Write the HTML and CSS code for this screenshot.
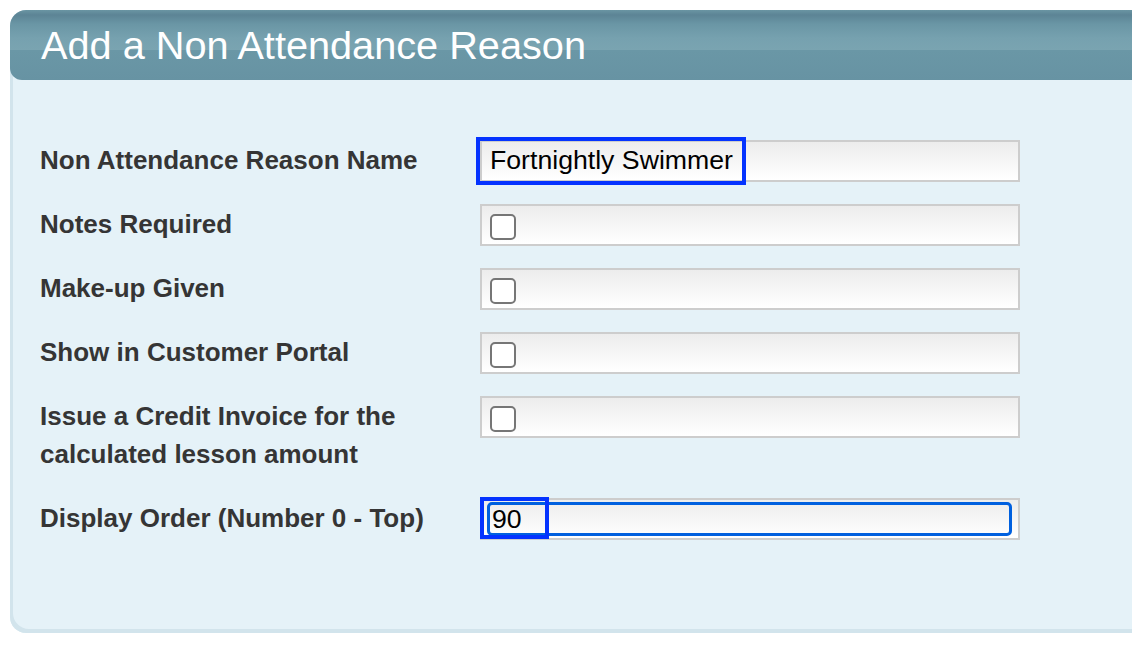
FILE: index.html
```html
<!DOCTYPE html>
<html lang="en">
<head>
<meta charset="utf-8">
<title>Add a Non Attendance Reason</title>
<link rel="stylesheet" href="styles.css">
</head>
<body>
<div class="panel">
  <div class="panel-header">
    <h1 class="panel-title">Add a Non Attendance Reason</h1>
  </div>
  <form class="panel-body">
    <div class="row">
      <label class="label">Non Attendance Reason Name</label>
      <div class="field">
        <input class="text-input" type="text" value="Fortnightly Swimmer">
        <span class="mark mark-name"></span>
      </div>
    </div>
    <div class="row">
      <label class="label">Notes Required</label>
      <div class="field"><input class="check" type="checkbox"></div>
    </div>
    <div class="row">
      <label class="label">Make-up Given</label>
      <div class="field"><input class="check" type="checkbox"></div>
    </div>
    <div class="row">
      <label class="label">Show in Customer Portal</label>
      <div class="field"><input class="check" type="checkbox"></div>
    </div>
    <div class="row">
      <label class="label">Issue a Credit Invoice for the calculated lesson amount</label>
      <div class="field"><input class="check" type="checkbox"></div>
    </div>
    <div class="row">
      <label class="label">Display Order (Number 0 - Top)</label>
      <div class="field">
        <input class="order-input" type="text" value="90">
        <span class="mark mark-order"></span>
      </div>
    </div>
  </form>
</div>
</body>
</html>
```

FILE: styles.css
```css
html, body {
  margin: 0;
  background: #ffffff;
}
body {
  padding: 10px 0 0 10px;
  overflow: hidden;
  font-family: "Liberation Sans", Arial, sans-serif;
}
.panel {
  width: 1140px;
  background: #e5f2f8;
  border-radius: 16px 0 0 16px;
  box-shadow: inset 3px -4px 0 #d2e4ec;
}
.panel-header {
  height: 70px;
  border-radius: 16px 0 0 12px;
  background: linear-gradient(to bottom,
    #6a95a3 0px,
    #5c8495 5px,
    #6a96a5 14px,
    #76a1af 28px,
    #7aa4b1 40px,
    #6a97a6 40px,
    #6793a3 70px);
}
.panel-title {
  margin: 0;
  padding-left: 31px;
  font-family: "Liberation Sans", Arial, sans-serif;
  font-size: 39.7px;
  line-height: 70px;
  font-weight: normal;
  color: #ffffff;
}
.panel-body {
  display: flex;
  flex-direction: column;
  gap: 22px;
  margin: 0;
  padding: 60px 0 93px 30px;
}
.row {
  display: flex;
  align-items: flex-start;
  gap: 20px;
}
.label {
  width: 420px;
  padding: 1px 0 3px;
  font-size: 26px;
  line-height: 38px;
  font-weight: bold;
  color: #353535;
}
.field {
  position: relative;
  width: 540px;
  height: 42px;
  box-sizing: border-box;
  border: 2px solid #cdcdcd;
  background: linear-gradient(to bottom, #ececec, #ffffff);
}
.text-input {
  display: block;
  width: 100%;
  height: 38px;
  box-sizing: border-box;
  margin: 0;
  padding: 0 8px 2px;
  border: none;
  outline: none;
  background: transparent;
  font-family: "Liberation Sans", Arial, sans-serif;
  font-size: 26.67px;
  color: #000000;
}
.check {
  appearance: none;
  -webkit-appearance: none;
  display: block;
  width: 26px;
  height: 26px;
  box-sizing: border-box;
  margin: 8px 0 0 8px;
  border: 2px solid #767676;
  border-radius: 5px;
  background: #ffffff;
}
.order-input {
  display: block;
  width: calc(100% - 11px);
  height: 34px;
  box-sizing: border-box;
  margin: 2px 6px 2px 5px;
  padding: 0 2px;
  border: 3px solid #0060df;
  border-radius: 5px;
  outline: none;
  background: transparent;
  font-family: "Liberation Sans", Arial, sans-serif;
  font-size: 26.67px;
  color: #000000;
}
.mark {
  position: absolute;
  box-sizing: border-box;
  border: 4px solid #0433ff;
  pointer-events: none;
}
.mark-name {
  left: -6px;
  top: -5px;
  width: 270px;
  height: 48px;
}
.mark-order {
  left: -2px;
  top: -3px;
  width: 69px;
  height: 42px;
}
```
